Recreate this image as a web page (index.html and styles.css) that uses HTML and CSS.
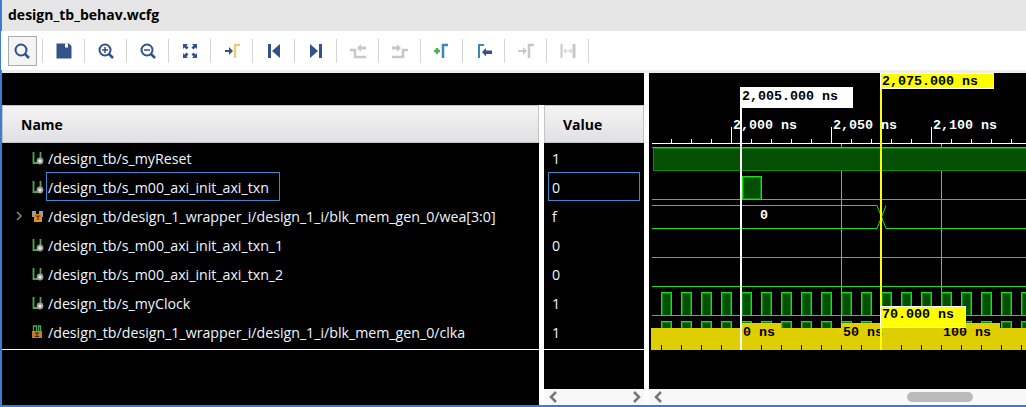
FILE: index.html
```html
<!DOCTYPE html>
<html lang="en">
<head>
  <meta charset="UTF-8" />
  <title>design_tb_behav.wcfg</title>
  <link rel="stylesheet" href="styles.css">
</head>
<body>
  <svg class="defs" width="0" height="0">
    <symbol id="sig" viewBox="0 0 14 14">
      <path d="M3.500 1v11h7v-11" fill="none" stroke="#46a852" stroke-width="1.800"/>
      <circle cx="10" cy="10" r="2.500" fill="#f0f0f0" stroke="#9a9a9a" stroke-width="1.800"/>
    </symbol>
  </svg>

  <div class="app">
    <div class="title">design_tb_behav.wcfg</div>

    <div class="toolbar">
      <div class="tool active"><svg viewBox="0 0 20 20"><circle cx="9" cy="9" r="5.500" class="ln"/><path d="M13 13l4 4" class="ln thick"/></svg></div>
      <div class="tool"><svg viewBox="0 0 20 20"><path d="M2.500 2.500h12.500l2.500 2.500v12.500h-15z" class="fill"/><path d="M11 2.500h3v4h-3z" fill="#fff"/></svg></div>
      <div class="tool"><svg viewBox="0 0 20 20"><circle cx="9" cy="9" r="5.500" class="ln"/><path d="M13 13l4 4" class="ln thick"/><path d="M6 9h6M9 6v6" class="ln thin"/></svg></div>
      <div class="tool"><svg viewBox="0 0 20 20"><circle cx="9" cy="9" r="5.500" class="ln"/><path d="M13 13l4 4" class="ln thick"/><path d="M6 9h6" class="ln thin"/></svg></div>
      <div class="tool"><svg viewBox="0 0 20 20"><path d="M3 3h5l-1.500 1.500 2 2-2 2-2-2-1.500 1.500zM17 3v5l-1.500-1.500-2 2-2-2 2-2-1.500-1.500zM3 17v-5l1.500 1.500 2-2 2 2-2 2 1.500 1.500zM17 17h-5l1.500-1.500-2-2 2-2 2 2 1.500-1.500z" class="fill"/></svg></div>
      <div class="tool"><svg viewBox="0 0 20 20"><path d="M3 9h4v-3l4 4-4 4v-3h-4z" class="fill"/><path d="M13 17v-13h5" fill="none" stroke="#e6d272" stroke-width="2.500"/></svg></div>
      <div class="tool"><svg viewBox="0 0 20 20"><path d="M4 3h3v14h-3zM16 3v14l-8-7z" class="fill"/></svg></div>
      <div class="tool"><svg viewBox="0 0 20 20"><path d="M13 3h3v14h-3zM4 3v14l8-7z" class="fill"/></svg></div>
      <div class="tool"><svg viewBox="0 0 20 20"><path d="M2 9h5v7h11" class="off"/><path d="M9 7l4-4v2.500h5v3h-5v2.500z" fill="#c8c8c8"/></svg></div>
      <div class="tool"><svg viewBox="0 0 20 20"><path d="M18 9h-5v7h-11" class="off"/><path d="M11 7l-4-4v2.500h-5v3h5v2.500z" fill="#c8c8c8"/></svg></div>
      <div class="tool"><svg viewBox="0 0 20 20"><path d="M2 10h6M5 7v6" fill="none" stroke="#4cb050" stroke-width="2.500"/><path d="M11 17v-13h5" fill="none" stroke="#3d86b8" stroke-width="2.500"/></svg></div>
      <div class="tool"><svg viewBox="0 0 20 20"><path d="M5 17v-13h5" fill="none" stroke="#3d86b8" stroke-width="2"/><path d="M8 11l4-4v2.500h6v3.500h-6v2.500z" class="fill"/></svg></div>
      <div class="tool"><svg viewBox="0 0 20 20"><path d="M2 9h5v-3l4 4-4 4v-3h-5z" fill="#c8c8c8"/><path d="M13 17v-13h5" class="off"/></svg></div>
      <div class="tool"><svg viewBox="0 0 20 20"><path d="M3.500 3v14" fill="none" stroke="#c8c8c8" stroke-width="2"/><path d="M16 3v14" fill="none" stroke="#c8c8c8" stroke-width="3"/><path d="M6 10h8M6 10l2-2M6 10l2 2M14 10l-2-2M14 10l-2 2" fill="none" stroke="#c8c8c8"/></svg></div>
    </div>
    <div class="toolbar-edge"></div>

    <div class="panes">
      <div class="name-pane">
        <div class="col-head">Name</div>
        <div class="rows">
          <div class="row"><span class="twisty"></span><svg class="icon"><use href="#sig"/></svg><span class="label">/design_tb/s_myReset</span></div>
          <div class="row"><span class="twisty"></span><svg class="icon"><use href="#sig"/></svg><span class="label selected">/design_tb/s_m00_axi_init_axi_txn</span></div>
          <div class="row">
            <span class="twisty"><svg viewBox="0 0 16 16"><path d="M3 4l4 4-4 4" fill="none" stroke="#8a8a8a" stroke-width="1.500"/></svg></span>
            <svg class="icon" viewBox="0 0 14 14"><path d="M2 2h4v3h-2v3h-2zM9 2h4v6h-2v-3h-2z" fill="#8aa0ba"/><path d="M4 5h8v8h-8z" fill="#e58a24"/><path d="M5.500 7h5M8 7v4" stroke="#4a3010" stroke-width="1.200" fill="none"/></svg>
            <span class="label">/design_tb/design_1_wrapper_i/design_1_i/blk_mem_gen_0/wea[3:0]</span>
          </div>
          <div class="row"><span class="twisty"></span><svg class="icon"><use href="#sig"/></svg><span class="label">/design_tb/s_m00_axi_init_axi_txn_1</span></div>
          <div class="row"><span class="twisty"></span><svg class="icon"><use href="#sig"/></svg><span class="label">/design_tb/s_m00_axi_init_axi_txn_2</span></div>
          <div class="row"><span class="twisty"></span><svg class="icon"><use href="#sig"/></svg><span class="label">/design_tb/s_myClock</span></div>
          <div class="row">
            <span class="twisty"></span>
            <svg class="icon" viewBox="0 0 14 14"><path d="M3.500 6v-5h3v5M10.500 6v-5h-2v5" stroke="#46a852" stroke-width="1.300" fill="none"/><path d="M2 6h10v7h-10z" fill="#c9792a"/><path d="M5 8h4M5 11.500h4M7 8v3.500" stroke="#3a2408" fill="none"/></svg>
            <span class="label">/design_tb/design_1_wrapper_i/design_1_i/blk_mem_gen_0/clka</span>
          </div>
        </div>
      </div>

      <div class="splitter inner"></div>

      <div class="value-pane">
        <div class="col-head">Value</div>
        <div class="rows">
          <div class="row"><span class="value">1</span></div>
          <div class="row"><span class="value selected">0</span></div>
          <div class="row"><span class="value">f</span></div>
          <div class="row"><span class="value">0</span></div>
          <div class="row"><span class="value">0</span></div>
          <div class="row"><span class="value">1</span></div>
          <div class="row"><span class="value">1</span></div>
        </div>
        <div class="spacer"></div>
        <div class="hscroll">
          <svg viewBox="0 0 10 16"><path d="M7 3l-5 5 5 5" class="chev"/></svg>
          <svg viewBox="0 0 10 16"><path d="M3 3l5 5-5 5" class="chev"/></svg>
        </div>
      </div>

      <div class="splitter"></div>

      <div class="wave-pane">
        <svg class="wave" viewBox="649 73 377 316" width="377" height="316">
          <defs>
            <pattern id="clk" x="661" y="0" width="20" height="400" patternUnits="userSpaceOnUse">
              <rect x="0.500" y="292.500" width="10" height="23" class="w-bright"/>
              <rect x="1.500" y="293.500" width="8" height="22" class="w-fill"/>
              <rect x="0.500" y="321.500" width="10" height="23" class="w-bright"/>
              <rect x="1.500" y="322.500" width="8" height="22" class="w-fill"/>
            </pattern>
            <pattern id="minor" x="671" y="0" width="20" height="400" patternUnits="userSpaceOnUse">
              <rect x="0" y="139" width="1" height="4" fill="#fff"/>
            </pattern>
            <pattern id="minor2" x="661" y="0" width="20" height="400" patternUnits="userSpaceOnUse">
              <rect x="0" y="345" width="1" height="5" fill="#000"/>
            </pattern>
          </defs>

          <!-- ruler -->
          <rect x="652" y="143" width="374" height="1" fill="#fff"/>
          <rect x="652" y="139" width="374" height="4" fill="url(#minor)"/>
          <path d="M731.500 127v16M831.500 127v16M931.500 127v16" stroke="#fff"/>
          <text x="733" y="129" class="t-white">2,000 ns</text>
          <text x="833" y="129" class="t-white">2,050 ns</text>
          <text x="933" y="129" class="t-white">2,100 ns</text>

          <!-- grid -->
          <path d="M841.500 144v205M941.500 144v205" stroke="#9a9a9a"/>

          <!-- s_myReset -->
          <rect x="653.500" y="148.500" width="380" height="22" class="w-edge"/>
          <rect x="652" y="147" width="374" height="1" fill="#17e017"/>

          <!-- s_m00_axi_init_axi_txn -->
          <rect x="742.500" y="176.500" width="19" height="23" class="w-bright"/>
          <rect x="743.500" y="177.500" width="17" height="21" class="w-fill"/>
          <path d="M652 199.500h374" class="w-line"/>

          <!-- wea bus -->
          <path d="M652 205.500h225l9 23h140M652 228.500h225l9-23" class="w-line"/>
          <text x="760" y="219" class="t-white">0</text>

          <!-- low signals -->
          <path d="M652 257.500h374M652 286.500h374" class="w-line"/>

          <!-- clocks -->
          <rect x="661" y="292" width="365" height="58" fill="url(#clk)"/>
          <path d="M652 315.500h374" class="w-line"/>

          <!-- time band -->
          <path d="M651 328h90v-5h40v5h60v-5h40v5h60v-5h59v5h26v22h-375z" fill="#e0cf00"/>
          <rect x="651" y="345" width="375" height="5" fill="url(#minor2)"/>
          <text x="743" y="336" class="t-black">0 ns</text>
          <text x="843" y="336" class="t-black">50 ns</text>
          <text x="943" y="336" class="t-black">100 ns</text>

          <!-- cursors -->
          <rect x="740" y="87" width="2" height="263" fill="#fff"/>
          <rect x="740" y="87" width="113" height="21" fill="#fff"/>
          <text x="742" y="100" class="t-black">2,005.000 ns</text>

          <rect x="880" y="73" width="2" height="277" fill="#ff0"/>
          <rect x="880.500" y="73.500" width="113" height="15" fill="#ff0" stroke="#fff"/>
          <text x="882" y="85" class="t-black">2,075.000 ns</text>

          <rect x="880.500" y="306.500" width="85" height="21" fill="#ff0" stroke="#fff"/>
          <text x="882" y="318" class="t-black">70.000 ns</text>
        </svg>
        <div class="hscroll wave-scroll">
          <svg viewBox="0 0 10 16"><path d="M7 3l-5 5 5 5" class="chev"/></svg>
          <div class="thumb"></div>
        </div>
      </div>
    </div>
  </div>
</body>
</html>
```

FILE: styles.css
```css
body {
  margin: 0;
  background: #fff;
  font-family: "Open Sans", "Noto Sans", sans-serif;
  overflow: hidden;
}
.defs {
  display: block;
  height: 0;
}
.app {
  width: 1024px;
  height: 405px;
  border-left: 2px solid #3f7bd0;
  border-bottom: 2px solid #3f7bd0;
  display: flex;
  flex-direction: column;
}
.title {
  height: 31px;
  line-height: 30px;
  padding-left: 6px;
  background: #e6e6e6;
  color: #000;
  font-size: 14px;
  font-weight: 700;
}

/* toolbar */
.toolbar {
  height: 39px;
  display: flex;
  align-items: center;
  background: #fff;
  margin-left: -1px;
}
.tool {
  width: 41px;
  height: 24px;
  border-right: 1px solid #d4d4d4;
  display: flex;
  align-items: center;
  justify-content: center;
  position: relative;
}
.tool svg {
  width: 20px;
  height: 20px;
  position: relative;
}
.tool.active::before {
  content: "";
  position: absolute;
  left: 7px;
  top: -3px;
  width: 27px;
  height: 28px;
  background: #f4f4f4;
  border: 1px solid #ababab;
}
.ln {
  fill: none;
  stroke: #2f5288;
  stroke-width: 2;
}
.ln.thick {
  stroke-width: 2.500;
}
.ln.thin {
  stroke-width: 1.500;
}
.fill {
  fill: #34528a;
}
.off {
  fill: none;
  stroke: #c8c8c8;
  stroke-width: 2.500;
}
.toolbar-edge {
  height: 3px;
  background: #eee;
}

/* panes */
.panes {
  flex: 1;
  display: flex;
  background: #000;
  min-height: 0;
}
.name-pane {
  width: 537px;
  padding-top: 32px;
}
.value-pane {
  width: 100px;
  padding-top: 32px;
  display: flex;
  flex-direction: column;
}
.splitter {
  width: 5px;
  background: #fff;
}
.splitter.inner {
  margin-top: 32px;
}
.col-head {
  height: 36px;
  line-height: 38px;
  padding-left: 18px;
  background: linear-gradient(#f4f4f4, #e1e1e5);
  border: 1px solid #c4c4c4;
  color: #000;
  font-size: 14px;
  font-weight: 700;
}
.rows {
  padding-bottom: 3px;
  border-bottom: 1px solid #fff;
}
.row {
  height: 29px;
  display: flex;
  align-items: center;
  padding-left: 12px;
  color: #eef6ff;
  font-size: 14.200px;
}
.twisty {
  width: 16px;
  height: 16px;
}
.twisty svg {
  display: block;
  width: 16px;
  height: 16px;
}
.icon {
  width: 14px;
  height: 14px;
  margin-right: 2px;
}
.label {
  height: 27px;
  line-height: 29px;
  padding: 0 10px 0 1px;
  border: 1px solid transparent;
  white-space: nowrap;
}
.value-pane .row {
  padding-left: 4px;
}
.value {
  width: 87px;
  height: 27px;
  line-height: 29px;
  padding-left: 3px;
  border: 1px solid transparent;
}
.selected {
  border-color: #3a8ad0;
}
.spacer {
  flex: 1;
}

/* scrollbars */
.hscroll {
  height: 16px;
  background: #f8f8f8;
  display: flex;
  justify-content: space-between;
  align-items: center;
  padding: 0 3px 0 5px;
}
.hscroll svg {
  width: 10px;
  height: 16px;
}
.chev {
  fill: none;
  stroke: #777;
  stroke-width: 2.500;
}
.wave-scroll {
  justify-content: flex-start;
}
.thumb {
  width: 66px;
  height: 10px;
  margin-left: 243px;
  border-radius: 5px;
  background: #bbb;
}

/* waveform */
.wave-pane {
  width: 377px;
  display: flex;
  flex-direction: column;
}
.wave {
  display: block;
}
.wave text {
  font-family: "Liberation Mono", monospace;
  font-size: 13.330px;
  font-weight: 700;
}
.t-white {
  fill: #fff;
}
.t-black {
  fill: #000;
}
.w-line {
  fill: none;
  stroke: #17e017;
}
.w-edge {
  fill: #044f04;
  stroke: #0a8f0a;
}
.w-bright {
  fill: none;
  stroke: #17e017;
}
.w-fill {
  fill: #044f04;
  stroke: #0a8f0a;
}
```
